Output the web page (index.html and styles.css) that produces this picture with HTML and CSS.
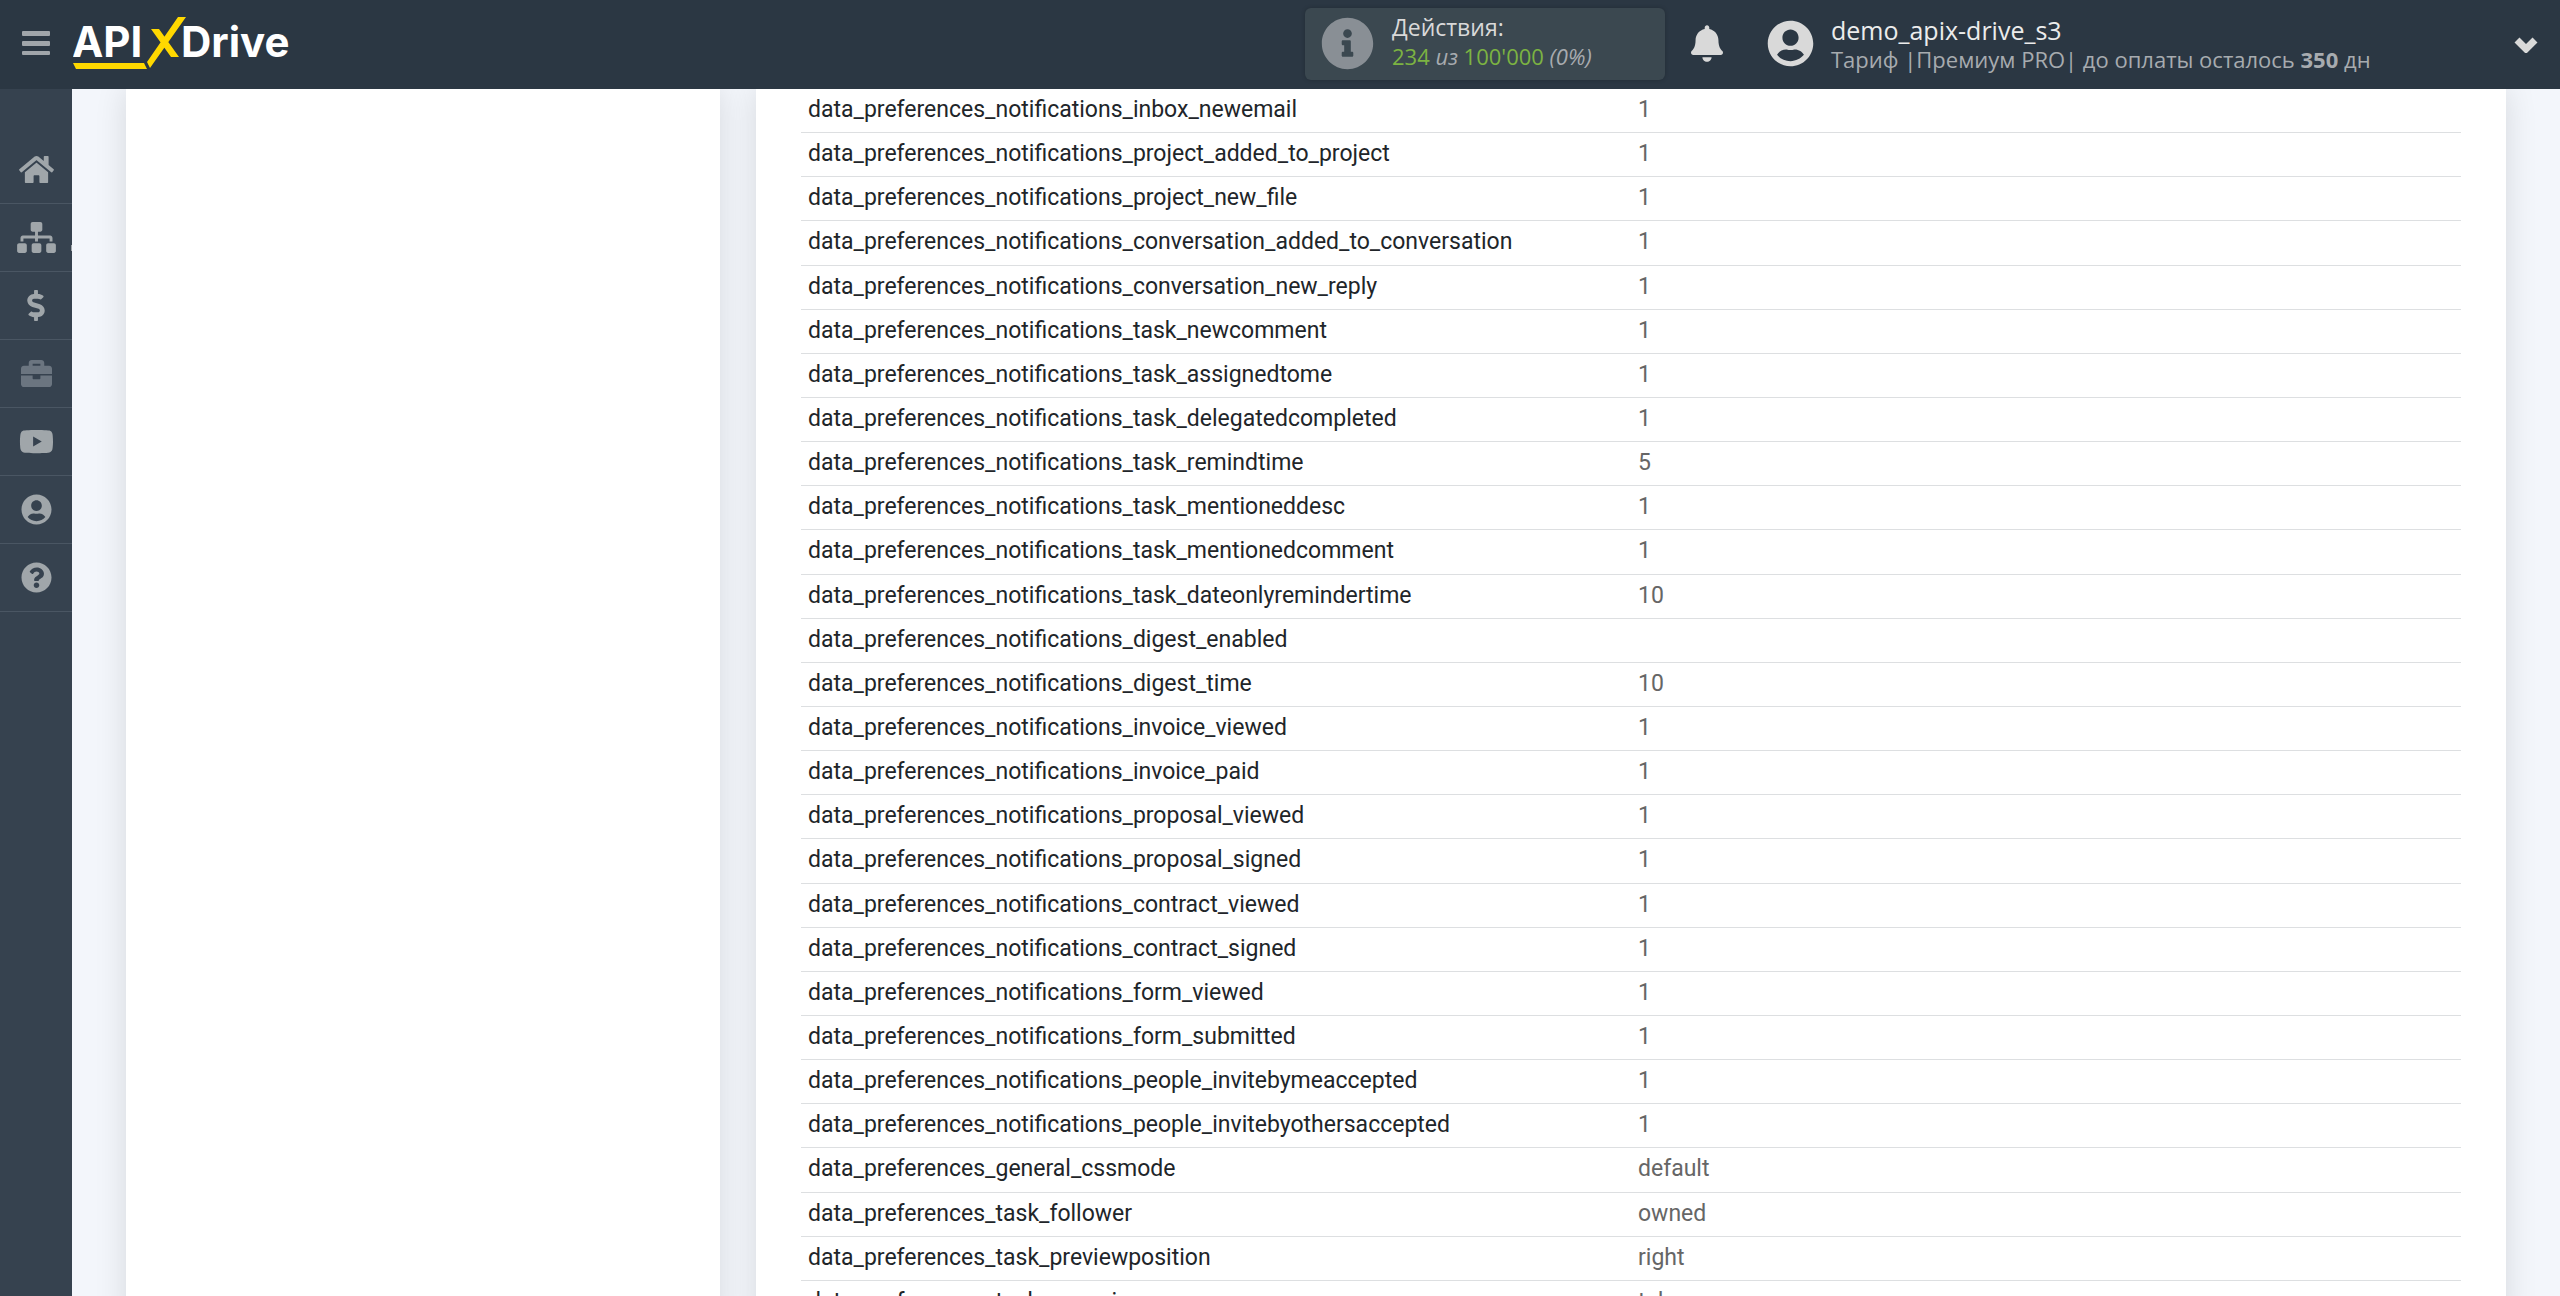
FILE: index.html
```
<!DOCTYPE html>
<html lang="ru">
<head>
<meta charset="utf-8">
<title>ApiX-Drive</title>
<link rel="stylesheet" href="styles.css">
</head>
<body>
<header class="topbar">
  <button class="menu-toggle" type="button" aria-label="Меню">
    <svg width="28" height="25" viewBox="0 0 28 25"><rect y="0" width="28" height="5" rx="1"/><rect y="10" width="28" height="5" rx="1"/><rect y="20" width="28" height="4" rx="1"/></svg>
  </button>
  <a class="logo" href="#" aria-label="ApiX-Drive">
    <svg width="222" height="56" viewBox="0 0 222 56">
      <text class="logo-text" x="-1" y="41">API</text>
      <text class="logo-text" x="108" y="41">Drive</text>
      <path class="logo-accent" d="M0 47h71l3 6H3zM105 1h8L77 52l-3-6zM78 13h8l20 28h-8z"/>
    </svg>
  </a>
  <div class="actions">
    <svg class="actions-icon" width="53" height="53" viewBox="0 0 512 512"><path d="M256 8C119 8 8 119 8 256s111 248 248 248 248-111 248-248S393 8 256 8zm0 110c23.200 0 42 18.800 42 42s-18.800 42-42 42-42-18.800-42-42 18.800-42 42-42zm56 254c0 6.600-5.400 12-12 12h-88c-6.600 0-12-5.400-12-12v-24c0-6.600 5.400-12 12-12h12v-64h-12c-6.600 0-12-5.400-12-12v-24c0-6.600 5.400-12 12-12h64c6.600 0 12 5.400 12 12v100h12c6.600 0 12 5.400 12 12v24z"/></svg>
    <div class="actions-text">
      <span class="actions-title">Действия:</span>
      <span class="actions-count"><b>234</b> <i>из</i> <b>100'000</b> <i>(0%)</i></span>
    </div>
  </div>
  <button class="bell" type="button" aria-label="Уведомления">
    <svg width="32" height="37" viewBox="0 0 448 512"><path d="M224 512c35.300 0 64-28.700 64-64H160c0 35.300 28.600 64 64 64zm215.400-149.700c-19.300-20.800-55.500-52-55.500-154.300 0-77.700-54.500-139.900-127.900-155.200V32c0-17.700-14.300-32-32-32s-32 14.300-32 32v20.800C118.600 68.100 64.100 130.300 64.100 208c0 102.300-36.200 133.500-55.500 154.300C2.600 368.700 0 376.500 0 384c.1 16.400 13 32 32.100 32h383.800c19.100 0 32-15.600 32.100-32 0-7.500-2.600-15.300-8.600-21.700z"/></svg>
  </button>
  <button class="account" type="button">
    <svg width="47" height="47" viewBox="0 0 496 512"><path d="M248 8C111 8 0 119 0 256s111 248 248 248 248-111 248-248S385 8 248 8zm0 96c48.600 0 88 39.400 88 88s-39.400 88-88 88-88-39.400-88-88 39.400-88 88-88zm0 344c-58.700 0-111.300-26.600-146.500-68.200 18.800-35.400 55.600-59.800 98.500-59.800 2.400 0 4.800.4 7.100 1.100 13 4.200 26.600 6.900 40.900 6.900s28-2.700 40.900-6.900c2.300-.7 4.700-1.100 7.100-1.100 42.900 0 79.700 24.400 98.500 59.800C359.300 421.400 306.700 448 248 448z"/></svg>
    <span class="account-text">
      <span class="account-name">demo_apix-drive_s3</span>
      <span class="account-plan">Тариф |Премиум PRO| до оплаты осталось <strong>350</strong> дн</span>
    </span>
    <svg class="chevron" width="26" height="18" viewBox="0 0 26 18"><path d="M4 5l9 9 9-9"/></svg>
  </button>
</header>
<div class="layout">
  <nav class="sidebar">
    <a href="#" aria-label="Главная"><svg width="35" height="31" viewBox="0 0 576 512"><path d="M280.400 148.300 96 300.100V464c0 8.800 7.200 16 16 16l112-.3c8.800 0 16-7.200 16-16V368c0-8.800 7.200-16 16-16h64c8.800 0 16 7.200 16 16v95.600c0 8.900 7.200 16 16 16l112 .3c8.800 0 16-7.200 16-16V300L295.700 148.300c-4.500-3.600-10.800-3.600-15.300 0zM571.600 251.500 488 182.600V44c0-6.600-5.400-12-12-12h-56c-6.600 0-12 5.400-12 12v72.600l-89.500-73.700c-17.700-14.600-43.300-14.600-61 0L4.300 251.500c-5.100 4.200-5.800 11.800-1.600 16.900l25.500 31c4.200 5.100 11.800 5.800 16.900 1.600l235.200-193.700c4.500-3.600 10.800-3.600 15.300 0L530.900 301c5.100 4.200 12.700 3.500 16.900-1.600l25.500-31c4.200-5.200 3.400-12.700-1.700-16.900z"/></svg></a>
    <a class="has-submenu" href="#" aria-label="Связи"><svg width="39" height="31" viewBox="0 0 640 512"><path d="M128 352H32c-17.700 0-32 14.300-32 32v96c0 17.700 14.300 32 32 32h96c17.700 0 32-14.300 32-32v-96c0-17.700-14.300-32-32-32zm-24-80h192v48h48v-48h192v48h48v-57.600c0-21.200-17.200-38.400-38.400-38.400H344v-64h40c17.700 0 32-14.300 32-32V32c0-17.700-14.300-32-32-32H256c-17.700 0-32 14.300-32 32v96c0 17.700 14.300 32 32 32h40v64H94.400C73.200 224 56 241.200 56 262.400V320h48v-48zm264 80h-96c-17.700 0-32 14.300-32 32v96c0 17.700 14.300 32 32 32h96c17.700 0 32-14.300 32-32v-96c0-17.700-14.300-32-32-32zm240 0h-96c-17.700 0-32 14.300-32 32v96c0 17.700 14.300 32 32 32h96c17.700 0 32-14.300 32-32v-96c0-17.700-14.300-32-32-32z"/></svg></a>
    <a href="#" aria-label="Оплата"><svg width="18" height="31" viewBox="0 0 288 512"><path d="M209.200 233.400l-108-31.600C88.700 198.200 80 186.500 80 173.500c0-16.300 13.200-29.500 29.500-29.500h66.300c12.200 0 24.200 3.700 34.200 10.500 6.100 4.100 14.300 3.100 19.500-2l34.800-34c7.100-6.900 6.100-18.400-1.800-24.500C238 74.800 207.400 64.100 176 64V16c0-8.800-7.200-16-16-16h-32c-8.800 0-16 7.200-16 16v48h-2.500C45.800 64-5.400 118.700.5 183.600c4.200 46.100 39.400 83.600 83.800 96.600l102.500 30c12.500 3.700 21.200 15.300 21.200 28.300 0 16.300-13.200 29.500-29.500 29.500h-66.300C100 368 88 364.300 78 357.500c-6.100-4.100-14.300-3.100-19.500 2l-34.800 34c-7.100 6.900-6.100 18.400 1.800 24.500 24.500 19.200 55.100 29.900 86.500 30v48c0 8.800 7.200 16 16 16h32c8.800 0 16-7.200 16-16v-48.200c46.600-.9 90.300-28.600 105.700-72.700 21.500-61.600-14.600-124.800-72.500-141.700z"/></svg></a>
    <a class="dim" href="#" aria-label="Сервисы"><svg width="31" height="31" viewBox="0 0 512 512"><path d="M320 336c0 8.800-7.200 16-16 16h-96c-8.800 0-16-7.200-16-16v-48H0v144c0 25.600 22.400 48 48 48h416c25.600 0 48-22.400 48-48V288H320v48zm144-208h-80V80c0-25.600-22.400-48-48-48H176c-25.600 0-48 22.400-48 48v48H48c-25.600 0-48 22.400-48 48v88h512v-88c0-25.600-22.400-48-48-48zm-144 0H192V96h128v32z"/></svg></a>
    <a href="#" aria-label="Видео"><svg width="35" height="31" viewBox="0 0 576 512"><path d="M549.700 124.100c-6.300-23.700-24.800-42.300-48.300-48.600C458.800 64 288 64 288 64S117.200 64 74.600 75.500c-23.500 6.300-42 24.900-48.300 48.600-11.400 42.900-11.400 132.300-11.400 132.300s0 89.400 11.400 132.300c6.300 23.700 24.800 41.500 48.300 47.800C117.200 448 288 448 288 448s170.800 0 213.400-11.500c23.500-6.300 42-24.200 48.300-47.800 11.400-42.900 11.400-132.300 11.400-132.300s0-89.400-11.400-132.300zM232.100 337.600V175.200l142.700 81.200z"/></svg></a>
    <a href="#" aria-label="Профиль"><svg width="31" height="31" viewBox="0 0 496 512"><path d="M248 8C111 8 0 119 0 256s111 248 248 248 248-111 248-248S385 8 248 8zm0 96c48.600 0 88 39.400 88 88s-39.400 88-88 88-88-39.400-88-88 39.400-88 88-88zm0 344c-58.700 0-111.300-26.600-146.500-68.200 18.800-35.400 55.600-59.800 98.500-59.800 2.400 0 4.800.4 7.100 1.100 13 4.200 26.600 6.900 40.900 6.900s28-2.700 40.900-6.900c2.300-.7 4.700-1.100 7.100-1.100 42.900 0 79.700 24.400 98.500 59.800C359.300 421.400 306.700 448 248 448z"/></svg></a>
    <a href="#" aria-label="Помощь"><svg width="31" height="31" viewBox="0 0 512 512"><path d="M504 256c0 137-111 248-248 248S8 393 8 256C8 119.100 119 8 256 8s248 111.100 248 248zM262.700 90c-54.500 0-89.300 23-116.500 63.800-3.500 5.300-2.400 12.400 2.700 16.300l34.700 26.300c5.200 3.900 12.600 3 16.700-2.100 17.900-22.700 30.100-35.800 57.300-35.800 20.400 0 45.700 13.100 45.700 33 0 15-12.400 22.700-32.500 34C247.100 238.500 216 254.900 216 296v4c0 6.600 5.400 12 12 12h56c6.600 0 12-5.400 12-12v-1.300c0-28.500 83.200-29.600 83.200-106.700 0-58-60.200-102-116.500-102zM256 338c-25.400 0-46 20.600-46 46 0 25.400 20.600 46 46 46s46-20.600 46-46c0-25.400-20.600-46-46-46z"/></svg></a>
  </nav>
  <main class="content">
    <section class="panel"></section>
    <section class="panel panel-data">
      <table class="fields">
        <tbody>
          <tr><td>data_preferences_notifications_inbox_newemail</td><td>1</td></tr>
          <tr><td>data_preferences_notifications_project_added_to_project</td><td>1</td></tr>
          <tr><td>data_preferences_notifications_project_new_file</td><td>1</td></tr>
          <tr><td>data_preferences_notifications_conversation_added_to_conversation</td><td>1</td></tr>
          <tr><td>data_preferences_notifications_conversation_new_reply</td><td>1</td></tr>
          <tr><td>data_preferences_notifications_task_newcomment</td><td>1</td></tr>
          <tr><td>data_preferences_notifications_task_assignedtome</td><td>1</td></tr>
          <tr><td>data_preferences_notifications_task_delegatedcompleted</td><td>1</td></tr>
          <tr><td>data_preferences_notifications_task_remindtime</td><td>5</td></tr>
          <tr><td>data_preferences_notifications_task_mentioneddesc</td><td>1</td></tr>
          <tr><td>data_preferences_notifications_task_mentionedcomment</td><td>1</td></tr>
          <tr><td>data_preferences_notifications_task_dateonlyremindertime</td><td>10</td></tr>
          <tr><td>data_preferences_notifications_digest_enabled</td><td></td></tr>
          <tr><td>data_preferences_notifications_digest_time</td><td>10</td></tr>
          <tr><td>data_preferences_notifications_invoice_viewed</td><td>1</td></tr>
          <tr><td>data_preferences_notifications_invoice_paid</td><td>1</td></tr>
          <tr><td>data_preferences_notifications_proposal_viewed</td><td>1</td></tr>
          <tr><td>data_preferences_notifications_proposal_signed</td><td>1</td></tr>
          <tr><td>data_preferences_notifications_contract_viewed</td><td>1</td></tr>
          <tr><td>data_preferences_notifications_contract_signed</td><td>1</td></tr>
          <tr><td>data_preferences_notifications_form_viewed</td><td>1</td></tr>
          <tr><td>data_preferences_notifications_form_submitted</td><td>1</td></tr>
          <tr><td>data_preferences_notifications_people_invitebymeaccepted</td><td>1</td></tr>
          <tr><td>data_preferences_notifications_people_invitebyothersaccepted</td><td>1</td></tr>
          <tr><td>data_preferences_general_cssmode</td><td>default</td></tr>
          <tr><td>data_preferences_task_follower</td><td>owned</td></tr>
          <tr><td>data_preferences_task_previewposition</td><td>right</td></tr>
          <tr><td>data_preferences_task_openview</td><td>tab</td></tr>
        </tbody>
      </table>
    </section>
  </main>
</div>
</body>
</html>
```
FILE: styles.css
```
* { box-sizing: border-box; }

body {
  margin: 0;
  height: 100vh;
  display: flex;
  flex-direction: column;
  overflow: hidden;
  background: #f3f6fb;
  font-family: Roboto, sans-serif;
}

button {
  margin: 0;
  padding: 0;
  border: 0;
  background: none;
  color: inherit;
  font: inherit;
  text-align: left;
}

svg { display: block; fill: currentColor; }

.topbar {
  flex: none;
  display: flex;
  align-items: center;
  height: 89px;
  padding: 0 21px 2px 22px;
  background: #2b3743;
  color: #d9d9d9;
  font-family: "Open Sans", sans-serif;
}

.menu-toggle { margin-right: 23px; color: #a0a5aa; }

.logo { margin-right: auto; color: #fff; }

.logo-text {
  font-family: Inter, sans-serif;
  font-size: 42px;
  font-weight: 700;
}

.logo-accent { fill: #ffd800; }

.actions {
  display: flex;
  align-items: center;
  gap: 18px;
  width: 360px;
  height: 72px;
  padding: 0 16px;
  border-radius: 6px;
  background: #3b4850;
  box-shadow: 0 0 4px rgba(0, 0, 0, .2);
}

.actions-icon { flex: none; color: #898f95; }

.actions-text {
  display: flex;
  flex-direction: column;
  padding-bottom: 3px;
}

.actions-title { font-size: 23px; line-height: 29px; }

.actions-count {
  color: #a7abaf;
  font-size: 22px;
  line-height: 29px;
}

.actions-count b { color: #7cb342; font-weight: 400; }

.bell { margin: 0 44px 0 26px; }

.account {
  display: flex;
  align-items: center;
  gap: 17px;
  width: 772px;
}

.account-text { display: flex; flex-direction: column; padding-top: 2px; }

.account-name { color: #ececec; font-size: 25px; line-height: 29px; }

.account-plan { color: #a7abaf; font-size: 22px; line-height: 29px; }

.chevron {
  margin-left: auto;
  fill: none;
  stroke: currentColor;
  stroke-width: 7;
}

.layout { flex: 1; display: flex; min-height: 0; }

.sidebar {
  flex: none;
  width: 72px;
  padding-top: 47px;
  background: #36424f;
}

.sidebar a {
  display: flex;
  align-items: center;
  justify-content: center;
  height: 68px;
  border-bottom: 1px solid #4a5663;
  color: #a0a6aa;
}

.sidebar a.dim { color: #6b7580; }

.sidebar a.has-submenu { position: relative; }

.sidebar a.has-submenu::after {
  content: "";
  position: absolute;
  right: 0;
  bottom: 20px;
  width: 1px;
  height: 6px;
  background: currentColor;
}

.content {
  flex: 1;
  display: grid;
  grid-template-columns: 594fr 1750fr;
  gap: 36px;
  padding: 0 54px;
  overflow: hidden;
}

.panel { background: #fff; box-shadow: 0 0 30px rgba(0, 0, 0, .12); }

.panel-data { padding: 0 45px; }

.fields {
  width: 100%;
  table-layout: fixed;
  border-collapse: collapse;
  font-size: 23px;
  line-height: 1.485;
}

.fields td {
  padding: 4px 7px 5px;
  border-bottom: 1px solid #dddfe1;
  color: #666;
}

.fields td:first-child { color: #212529; }
```
